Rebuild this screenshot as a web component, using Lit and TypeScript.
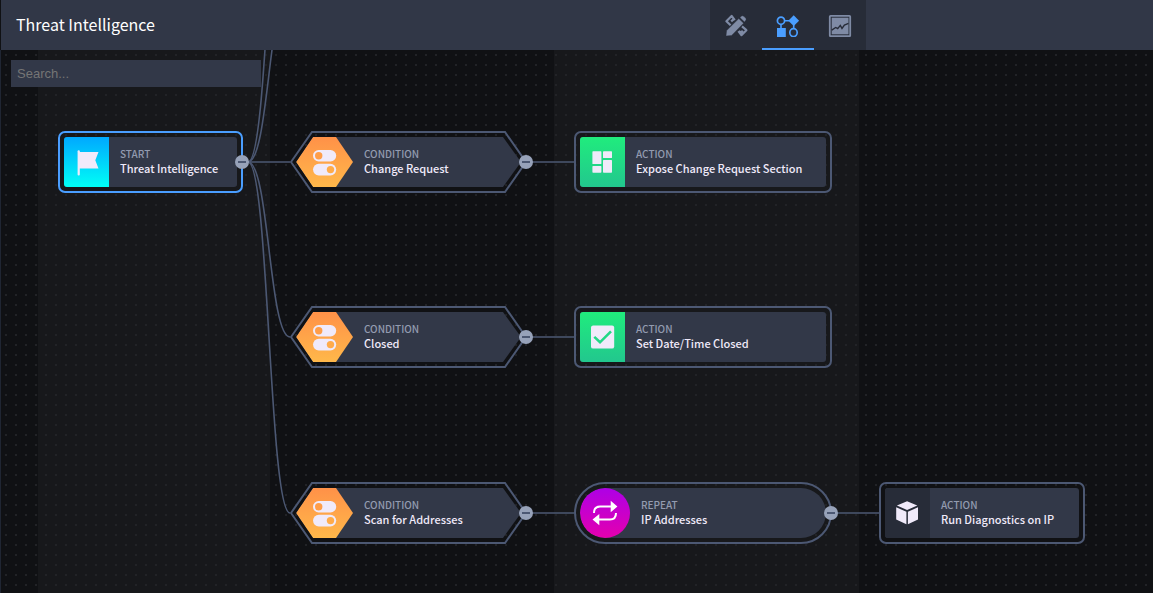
import { LitElement, html, svg, css, nothing } from "lit";
import { customElement, property, state } from "lit/decorators.js";
import { classMap } from "lit/directives/class-map.js";
import { styleMap } from "lit/directives/style-map.js";

type Kind = "start" | "condition" | "action" | "repeat";

interface FlowNode {
  kind: Kind;
  name: string;
  icon: string;
  tone: string;
  x: number;
  y: number;
  width: number;
  branches?: boolean;
}

const NODES: FlowNode[] = [
  { kind: "start", name: "Threat Intelligence", icon: "flag", tone: "cyan", x: 58, y: 81, width: 185, branches: true },
  { kind: "condition", name: "Change Request", icon: "toggles", tone: "orange", x: 290, y: 81, width: 237, branches: true },
  { kind: "action", name: "Expose Change Request Section", icon: "board", tone: "green", x: 574, y: 81, width: 258 },
  { kind: "condition", name: "Closed", icon: "toggles", tone: "orange", x: 290, y: 256, width: 237, branches: true },
  { kind: "action", name: "Set Date/Time Closed", icon: "check", tone: "green", x: 574, y: 256, width: 258 },
  { kind: "condition", name: "Scan for Addresses", icon: "toggles", tone: "orange", x: 290, y: 432, width: 237, branches: true },
  { kind: "repeat", name: "IP Addresses", icon: "loop", tone: "magenta", x: 574, y: 432, width: 258, branches: true },
  { kind: "action", name: "Run Diagnostics on IP", icon: "cube", tone: "plain", x: 879, y: 432, width: 206 },
];

/* Each edge runs from a collapse handle to the left side of a node. */
const EDGES: [number, number, number, number][] = [
  [248, 112, 290, -240],
  [248, 112, 290, -64],
  [248, 112, 290, 112],
  [248, 112, 290, 287],
  [248, 112, 290, 463],
  [532, 112, 574, 112],
  [532, 287, 574, 287],
  [532, 463, 574, 463],
  [837, 463, 879, 463],
];

const edgePath = ([x1, y1, x2, y2]: [number, number, number, number]) => {
  const mid = (x1 + x2) / 2;
  return `M${x1} ${y1} C${mid} ${y1} ${mid} ${y2} ${x2} ${y2}`;
};

const ICONS: Record<string, unknown> = {
  flag: svg`<rect x="4.6" y="2.2" width="2.2" height="25.4" rx="1"/><path d="M5.5 4H25.5L22.3 12.2L25.5 20.6H5.5Z"/>`,
  board: svg`<rect x="3.4" y="3.3" width="9" height="12.8" rx=".7"/><rect x="3.4" y="18" width="9" height="6.8" rx=".7"/><rect x="14" y="3.3" width="9" height="6.8" rx=".7"/><rect x="14" y="11.9" width="9" height="12.9" rx=".7"/>`,
  check: svg`<rect x="2" y="2.4" width="23.2" height="23.2" rx="2.2"/><path d="M5.3 13.9L11 19.3L22 8.3" fill="none" stroke="#22d986" stroke-width="2.6"/>`,
  loop: svg`<path d="M3 14C3 9.4 5 7.5 9 7.5H20M25 14C25 18.6 23 20.5 19 20.5H8" fill="none" stroke="currentColor" stroke-width="2"/><path d="M19.7 1.7L26.4 7.5L19.7 13.3ZM8.3 14.9L1.5 20.6L8.3 26.3Z"/>`,
  cube: svg`<path d="M13.1 2.2L23.3 6.6L13.1 11L2.9 6.6ZM2.2 8.3L12.4 12.7V25.3L2.2 20.4ZM13.9 12.7L24 8.3V20.4L13.9 25.3Z"/>`,
  toggles: svg`<rect x="2" y="2" width="23.2" height="11.4" rx="5.7"/><rect x="2" y="15.8" width="23.2" height="11.6" rx="5.8"/><circle cx="7.7" cy="7.8" r="3.7" fill="#ff9d48"/><circle cx="19.5" cy="21.6" r="3.7" fill="#ffab4a"/>`,
  design: svg`<path d="M10.8 7.2L7.6 3L2.4 8.2L6.6 12.2M7.2 8.4L9.2 6.6M14.4 18.2L17.4 22.2L22.4 17.2L18 13.4M15 18L17 19.6L18.8 17.8" fill="none" stroke="currentColor" stroke-width="2.2" stroke-linejoin="round"/><path d="M2 23L2.6 17.6L14.8 5.6L19.6 10.2L7.6 22.4ZM15.9 4.6L17.6 3.1Q18.8 2.3 19.8 3.3L21.8 5.3Q22.6 6.3 21.8 7.3L20.5 9Z" stroke="#272c38" stroke-width=".4"/>`,
  flow: svg`<path d="M8.4 7.7H13M5 11.4V15M17.7 12V16" fill="none" stroke="currentColor" stroke-width="1.6"/><circle cx="5" cy="7.7" r="3.6" fill="none" stroke="currentColor" stroke-width="1.7"/><path d="M17.7 2.2L23.1 7.7L17.7 13.1L12.3 7.7Z"/><rect x="1" y="15" width="8.8" height="9"/><ellipse cx="17.5" cy="19.6" rx="3.7" ry="4" fill="none" stroke="currentColor" stroke-width="1.7"/>`,
  chart: svg`<rect x="1.8" y="2.8" width="20.4" height="20.4" rx=".8" fill="none" stroke="currentColor" stroke-width="1.8"/><rect x="3.7" y="4.7" width="16.8" height="16.6"/><path d="M3.7 17.2L7.7 14.5L9.7 15.7L12.3 12.4L14 15.4L16.4 12L20.5 10.4" fill="none" stroke="#272c38" stroke-width="1.4"/>`,
};

@customElement("flow-node")
class FlowNodeCard extends LitElement {
  @property({ attribute: false }) node!: FlowNode;
  @property({ type: Boolean }) selected = false;

  static styles = css`
    :host {
      display: block;
      height: 62px;
      position: relative;
      color: #f0eafa;
    }
    .card {
      box-sizing: border-box;
      height: 100%;
      padding: 4px;
      border: 2px solid #4c5873;
      border-radius: 7px;
    }
    .card.selected {
      border-color: #4a9eff;
    }
    .body {
      display: flex;
      align-items: center;
      height: 100%;
      background: #323848;
      border-radius: 3px;
      overflow: hidden;
    }
    .badge {
      display: grid;
      place-items: center;
      flex: none;
      width: 45px;
      height: 100%;
    }
    .icon {
      width: 28px;
      height: 28px;
      fill: currentColor;
    }
    .cyan { background: linear-gradient(#00a8ff, #00fff6); }
    .green { background: linear-gradient(#20ec7d, #22c78e); }
    .orange { background: linear-gradient(#ff9148, #ffb84a); }
    .magenta { background: linear-gradient(#ae00e6, #e400ae); color: #fff; }
    .plain { background: #272c38; }
    .text {
      min-width: 0;
      padding: 0 11px 2px;
      white-space: nowrap;
    }
    .kind {
      font-size: 10px;
      line-height: 14px;
      font-weight: 500;
      text-transform: uppercase;
      color: #939bb0;
    }
    .name {
      font-size: 11px;
      line-height: 15px;
      font-weight: 500;
    }
    .repeat .card,
    .repeat .body {
      border-radius: 31px;
    }
    .repeat .badge {
      width: 50px;
      border-radius: 50%;
    }
    .shape {
      height: 100%;
    }
    .condition .card {
      border-color: transparent;
    }
    .condition .body {
      border-radius: 0;
      clip-path: polygon(17px 0, calc(100% - 18px) 0, 100% 50%, calc(100% - 18px) 100%, 17px 100%, 0 50%);
    }
    .condition .badge {
      width: 57px;
      clip-path: polygon(17px 0, 40px 0, 100% 50%, 40px 100%, 17px 100%, 0 50%);
    }
    .outline {
      position: absolute;
      inset: 0;
      width: 100%;
      height: 100%;
      fill: none;
      stroke: #4c5873;
      stroke-width: 2px;
      pointer-events: none;
    }
    .handle {
      position: absolute;
      right: -6px;
      top: 24px;
      display: grid;
      place-items: center;
      width: 14px;
      height: 14px;
      padding: 0;
      border: 0;
      border-radius: 50%;
      background: #97a2b9;
      cursor: pointer;
    }
    .minus {
      width: 8px;
      height: 2px;
      background: #4c5873;
    }
  `;

  render() {
    const n = this.node;
    return html`
      <div class="shape ${n.kind}">
        ${n.kind === "condition"
          ? html`<svg class="outline" viewBox="0 0 237 62" preserveAspectRatio="none" aria-hidden="true">
              <path d="M1 31L22 1H215L236 31L215 61H22Z" />
            </svg>`
          : nothing}
        <div class=${classMap({ card: true, selected: this.selected })}>
          <div class="body">
            <div class="badge ${n.tone}">
              <svg class="icon" viewBox="0 0 28 28" aria-hidden="true">${ICONS[n.icon]}</svg>
            </div>
            <div class="text">
              <div class="kind">${n.kind}</div>
              <div class="name">${n.name}</div>
            </div>
          </div>
        </div>
        ${n.branches
          ? html`<button class="handle" type="button" aria-label="Collapse ${n.name}"><span class="minus"></span></button>`
          : nothing}
      </div>
    `;
  }
}

@customElement("app-root")
class AppRoot extends LitElement {
  @state() private tab = "flow";

  static styles = css`
    :host {
      display: flex;
      flex-direction: column;
      height: 100vh;
      overflow: hidden;
      background: #101114;
      color: #fff;
      font-family: "Noto Sans CJK SC", "Noto Sans", sans-serif;
    }
    .header {
      display: grid;
      grid-template-columns: minmax(160px, 709px) auto 1fr;
      align-items: center;
      flex: none;
      height: 50px;
      margin-left: 1px;
      background: #313747;
    }
    .title {
      margin: 0;
      padding: 0 0 2px 15px;
      font-size: 16px;
      line-height: 24px;
      font-weight: 400;
    }
    .tabs {
      display: flex;
      height: 100%;
      background: #272c38;
    }
    .tab {
      display: grid;
      place-items: center;
      width: 52px;
      height: 100%;
      padding: 0;
      border: 0;
      background: none;
      color: #7f8ba5;
      cursor: pointer;
    }
    .tab.active {
      color: #4a9eff;
      box-shadow: inset 0 -2px #4a9eff;
    }
    .tab-icon {
      width: 24px;
      height: 24px;
      fill: currentColor;
    }
    .canvas {
      position: relative;
      flex: 1;
      min-height: 0;
      overflow: hidden;
      background:
        conic-gradient(from 90deg at 8px 8px, #222327 90deg, transparent 0) 7px 6px / 10px 10px,
        linear-gradient(90deg, #101114 38px, #17181b 38px 270px, #101114 270px 554px, #17181b 554px 859px, #101114 859px);
    }
    .canvas::before {
      content: "";
      position: absolute;
      inset: 0 auto 0 0;
      width: 1px;
      background: #202633;
    }
    .edges {
      position: absolute;
      inset: 0;
      width: 100%;
      height: 100%;
      fill: none;
      stroke: #4c5873;
    }
    .node {
      position: absolute;
    }
    .search {
      position: absolute;
      left: 11px;
      top: 10px;
      box-sizing: border-box;
      width: 250px;
      height: 27px;
      padding: 0 6px;
      border: 0;
      border-radius: 0;
      outline: none;
      background: #323848;
      color: #fff;
      font: 13px "Liberation Sans", Arial, sans-serif;
    }
    .search::placeholder {
      color: #757575;
    }
  `;

  private renderTab(id: string, label: string) {
    return html`<button
      type="button"
      class=${classMap({ tab: true, active: this.tab === id })}
      aria-label=${label}
      aria-pressed=${this.tab === id}
      @click=${() => (this.tab = id)}
    >
      <svg class="tab-icon" viewBox="0 0 24 24" aria-hidden="true">${ICONS[id]}</svg>
    </button>`;
  }

  render() {
    return html`
      <header class="header">
        <h1 class="title">Threat Intelligence</h1>
        <nav class="tabs">
          ${this.renderTab("design", "Design")} ${this.renderTab("flow", "Workflow")} ${this.renderTab("chart", "Reports")}
        </nav>
      </header>
      <main class="canvas">
        <svg class="edges" stroke-width="1.6" aria-hidden="true">${EDGES.map((e) => svg`<path d=${edgePath(e)} />`)}</svg>
        ${NODES.map(
          (n) => html`<flow-node
            class="node"
            style=${styleMap({ left: `${n.x}px`, top: `${n.y}px`, width: `${n.width}px` })}
            .node=${n}
            ?selected=${n.kind === "start"}
          ></flow-node>`
        )}
        <input class="search" type="search" placeholder="Search..." aria-label="Search" />
      </main>
    `;
  }
}
